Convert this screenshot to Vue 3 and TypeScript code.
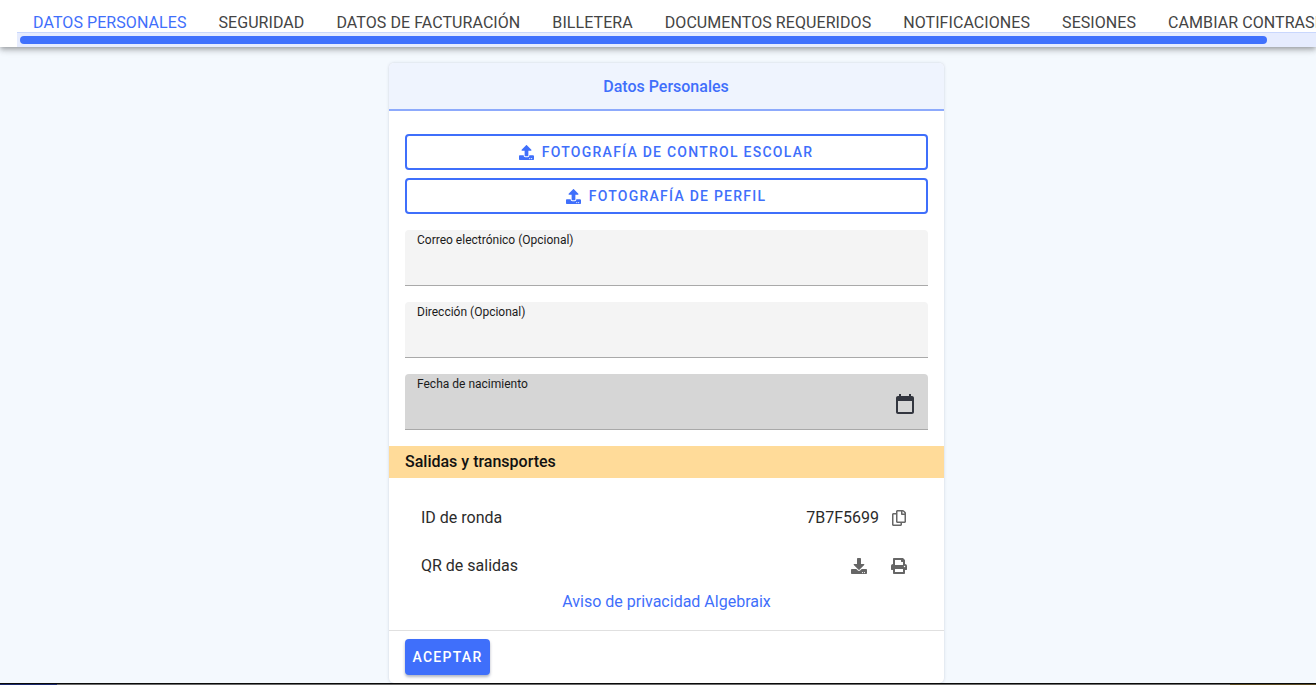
<script setup lang="ts">
const tabs: string[] = [
  'Datos personales',
  'Seguridad',
  'Datos de facturación',
  'Billetera',
  'Documentos requeridos',
  'Notificaciones',
  'Sesiones',
  'Cambiar contraseña',
]
const uploads: string[] = ['Fotografía de control escolar', 'Fotografía de perfil']
const fields: string[] = ['Correo electrónico (Opcional)', 'Dirección (Opcional)']
</script>

<template>
  <div class="page">
    <header class="topbar">
      <nav class="tabs">
        <a v-for="(t, i) in tabs" :key="t" class="tab" :class="{ active: i === 0 }">{{ t }}</a>
      </nav>
      <div class="track"><div class="thumb"></div></div>
    </header>

    <main class="main">
      <section class="card">
        <h1 class="card-title">Datos Personales</h1>
        <div class="form">
          <button v-for="u in uploads" :key="u" class="upload" type="button">
            <svg class="up-icon" viewBox="0 0 512 512" fill="currentColor"><path d="M296 384h-80c-13.3 0-24-10.7-24-24V192h-87.7c-17.8 0-26.7-21.5-14.1-34.1L242.3 5.7c7.5-7.5 19.8-7.5 27.3 0l152.2 152.2c12.6 12.6 3.7 34.1-14.1 34.1H320v168c0 13.3-10.7 24-24 24zm216-8v112c0 13.3-10.7 24-24 24H24c-13.3 0-24-10.7-24-24V376c0-13.3 10.7-24 24-24h136v8c0 30.9 25.1 56 56 56h80c30.9 0 56-25.1 56-56v-8h136zm-124 88c0-11-9-20-20-20s-20 9-20 20 9 20 20 20 20-9 20-20zm64 0c0-11-9-20-20-20s-20 9-20 20 9 20 20 20 20-9 20-20z"/></svg>
            <span>{{ u }}</span>
          </button>
          <div class="fields">
            <div v-for="f in fields" :key="f" class="field"><label>{{ f }}</label></div>
            <div class="field disabled">
              <label>Fecha de nacimiento</label>
              <svg class="cal" viewBox="0 0 24 24" fill="currentColor"><path d="M19 4h-1V2h-2v2H8V2H6v2H5c-1.1 0-2 .9-2 2v14c0 1.1.9 2 2 2h14c1.1 0 2-.9 2-2V6c0-1.1-.9-2-2-2zm0 16H5V9h14v11z"/></svg>
            </div>
          </div>
        </div>
        <h2 class="band">Salidas y transportes</h2>
        <div class="rows">
          <div class="row">
            <span>ID de ronda</span>
            <span class="right">
              <span class="code">7B7F5699</span>
              <span class="btn">
                <svg class="ico-copy" viewBox="0 0 448 512" fill="currentColor"><path d="M433.941 65.941l-51.882-51.882A48 48 0 0 0 348.118 0H176c-26.51 0-48 21.49-48 48v48H48c-26.51 0-48 21.49-48 48v320c0 26.51 21.49 48 48 48h224c26.51 0 48-21.49 48-48v-48h80c26.51 0 48-21.49 48-48V99.882a48 48 0 0 0-14.059-33.941zM266 464H54a6 6 0 0 1-6-6V150a6 6 0 0 1 6-6h74v224c0 26.51 21.49 48 48 48h96v42a6 6 0 0 1-6 6zm128-96H182a6 6 0 0 1-6-6V54a6 6 0 0 1 6-6h106v88c0 13.255 10.745 24 24 24h88v202a6 6 0 0 1-6 6zm6-256h-64V48h9.632c1.591 0 3.117.632 4.243 1.757l48.368 48.368a6 6 0 0 1 1.757 4.243V112z"/></svg>
              </span>
            </span>
          </div>
          <div class="row">
            <span>QR de salidas</span>
            <span class="right icons">
              <span class="btn">
                <svg class="ico" viewBox="0 0 512 512" fill="currentColor"><path d="M216 0h80c13.3 0 24 10.7 24 24v168h87.7c17.8 0 26.7 21.5 14.1 34.1L269.7 378.3c-7.5 7.5-19.8 7.5-27.3 0L90.1 226.1c-12.6-12.6-3.7-34.1 14.1-34.1H192V24c0-13.3 10.7-24 24-24zm296 376v112c0 13.3-10.7 24-24 24H24c-13.3 0-24-10.7-24-24V376c0-13.3 10.7-24 24-24h146.7l49 49c20.1 20.1 52.5 20.1 72.6 0l49-49H488c13.3 0 24 10.7 24 24zm-124 88c0-11-9-20-20-20s-20 9-20 20 9 20 20 20 20-9 20-20zm64 0c0-11-9-20-20-20s-20 9-20 20 9 20 20 20 20-9 20-20z"/></svg>
              </span>
              <span class="btn">
                <svg class="ico" viewBox="0 0 512 512" fill="currentColor"><path d="M448 192V77.25c0-8.49-3.37-16.62-9.37-22.63L393.37 9.37c-6-6-14.14-9.37-22.63-9.37H96C78.33 0 64 14.33 64 32v160c-35.35 0-64 28.65-64 64v112c0 8.84 7.16 16 16 16h48v96c0 17.67 14.33 32 32 32h320c17.67 0 32-14.33 32-32v-96h48c8.84 0 16-7.16 16-16V256c0-35.35-28.65-64-64-64zm-64 256H128v-96h256v96zm0-224H128V64h192v48c0 8.84 7.16 16 16 16h48v96zm48 72c-13.25 0-24-10.75-24-24 0-13.26 10.75-24 24-24s24 10.74 24 24c0 13.25-10.75 24-24 24z"/></svg>
              </span>
            </span>
          </div>
          <a class="privacy">Aviso de privacidad Algebraix</a>
        </div>
        <footer class="actions">
          <button class="accept" type="button">Aceptar</button>
        </footer>
      </section>
    </main>
    <div class="strip"></div>
  </div>
</template>

<style>
html, body { margin: 0; height: 100%; overflow: hidden; }
</style>

<style scoped>
.page {
  height: 685px;
  display: flex;
  flex-direction: column;
  background: #f4f9fe;
  font-family: Roboto, "Liberation Sans", sans-serif;
  overflow: hidden;
}
.topbar {
  height: 47px;
  flex: none;
  background: #fff;
  box-shadow: 0 2px 4px -1px rgba(0, 0, 0, .2), 0 4px 5px rgba(0, 0, 0, .14), 0 1px 10px rgba(0, 0, 0, .12);
  padding-left: 17px;
  position: relative;
  z-index: 2;
}
.tabs { display: flex; height: 32px; white-space: nowrap; overflow: hidden; margin-right: -17px; }
.tab {
  flex: none;
  padding: 0 16px;
  line-height: 45px;
  height: 32px;
  font-size: 16px;
  letter-spacing: .07px;
  color: #444;
  text-transform: uppercase;
}
.tab.active { color: #3f6ffb; }
.track {
  height: 15px;
  background: #e6ecfe;
  border-top: 1px solid #c9d7fd;
  box-sizing: border-box;
  padding: 3px 0 0 3px;
}
.thumb { width: 1247px; height: 8px; background: #4071fd; border-radius: 4px; }
.main {
  flex: 1;
  min-height: 0;
  display: flex;
  justify-content: center;
  padding: 16px 0 0 17px;
}
.card {
  width: 555px;
  height: 620px;
  flex: none;
  background: #fff;
  border-radius: 5px;
  box-shadow: 0 0 3px rgba(60, 70, 100, .22);
  overflow: hidden;
  display: flex;
  flex-direction: column;
}
.card-title {
  margin: 0;
  height: 46px;
  line-height: 47px;
  padding-right: 1px;
  text-align: center;
  font-size: 16px;
  font-weight: 500;
  color: #3f6ffb;
  background: #eff4fe;
  border-bottom: 2px solid #8daafc;
}
.form { padding: 23px 16px 16px; display: flex; flex-direction: column; gap: 8px; }
.upload {
  height: 36px;
  box-sizing: border-box;
  border: 2px solid #3f6ffb;
  border-radius: 4px;
  background: #fff;
  color: #3f6ffb;
  font: 500 14px Roboto, "Liberation Sans", sans-serif;
  letter-spacing: 1.25px;
  text-transform: uppercase;
  display: flex;
  align-items: center;
  justify-content: center;
  gap: 8px;
  padding: 0 1px 0 0;
}
.up-icon { width: 15px; height: 15px; }
.fields { display: flex; flex-direction: column; gap: 16px; margin-top: 8px; }
.field {
  height: 56px;
  box-sizing: border-box;
  background: #f4f4f4;
  border-bottom: 1px solid #a9a9a9;
  border-radius: 4px 4px 0 0;
  padding: 3px 12px 0;
  position: relative;
}
.field label {
  display: block;
  font-size: 12px;
  line-height: 14px;
  color: #1b1b1b;
}
.field.disabled { background: #d6d6d6; }
.cal { position: absolute; right: 11px; top: 18px; width: 24px; height: 24px; color: #33363f; }
.band {
  margin: 0;
  height: 32px;
  line-height: 32px;
  padding: 0 16px;
  background: #ffdb99;
  color: #111;
  font-size: 16px;
  font-weight: 500;
}
.rows { padding: 15px 32px 0; flex: 1; font-size: 16px; color: #2b2b2b; }
.row {
  height: 48px;
  display: flex;
  align-items: center;
  justify-content: space-between;
}
.right { display: flex; align-items: center; margin-right: 1px; }
.code { margin-right: 8px; }
.btn {
  width: 24px;
  height: 24px;
  box-sizing: border-box;
  padding-top: 2px;
  display: flex;
  align-items: center;
  justify-content: center;
  color: #666;
}
.ico { width: 16px; height: 16px; }
.ico-copy { width: 14px; height: 16px; }
.icons { gap: 16px; }
.privacy {
  display: block;
  text-align: center;
  color: #3f6ffb;
  font-size: 16px;
  line-height: 24px;
  padding-top: 1px;
}
.actions {
  height: 53px;
  flex: none;
  box-sizing: border-box;
  border-top: 1px solid #e0e0e0;
  padding: 8px 16px;
}
.accept {
  height: 36px;
  width: 85px;
  border: 0;
  border-radius: 4px;
  background: #3f6ffb;
  color: #fff;
  font: 500 14px Roboto, "Liberation Sans", sans-serif;
  letter-spacing: 1.25px;
  text-transform: uppercase;
  box-shadow: 0 2px 3px rgba(30, 40, 80, .35);
  padding: 0;
}
.strip {
  height: 2px;
  box-sizing: border-box;
  border-top: 1px solid #0a0a0a;
  background: linear-gradient(90deg, #1c2a6e 0 57px, #6a6a6a 57px 1230px, #5a4a22 1230px);
  position: relative;
  z-index: 3;
  flex: none;
}
</style>
